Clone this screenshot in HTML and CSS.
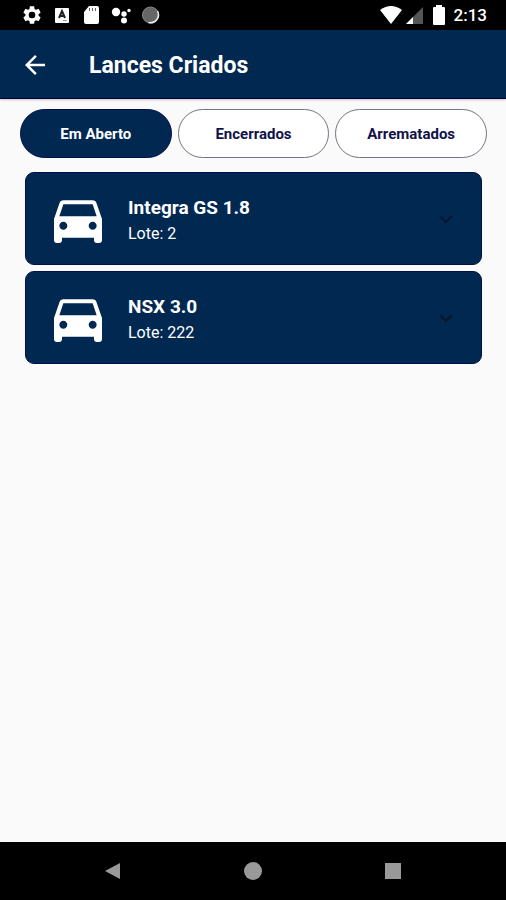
FILE: index.html
```html
<!DOCTYPE html>
<html lang="pt-BR">
<head>
  <meta charset="UTF-8">
  <meta name="viewport" content="width=device-width, initial-scale=1.0">
  <title>Lances Criados</title>
  <link rel="stylesheet" href="styles.css">
</head>
<body>
  <div class="status-bar">
    <div class="status-left">
      <svg width="22" height="22" viewBox="0 0 24 24" fill="#fff"><path d="M19.14 12.94c.04-.3.06-.61.06-.94 0-.32-.02-.64-.07-.94l2.03-1.58c.18-.14.23-.41.12-.61l-1.92-3.32c-.12-.22-.37-.29-.59-.22l-2.39.96c-.5-.38-1.03-.7-1.62-.94l-.36-2.54c-.04-.24-.24-.41-.48-.41h-3.84c-.24 0-.43.17-.47.41l-.36 2.54c-.59.24-1.13.57-1.62.94l-2.39-.96c-.22-.08-.47 0-.59.22L2.74 8.87c-.12.21-.08.47.12.61l2.03 1.58c-.05.3-.09.63-.09.94s.02.64.07.94l-2.03 1.58c-.18.14-.23.41-.12.61l1.92 3.32c.12.22.37.29.59.22l2.39-.96c.5.38 1.03.7 1.62.94l.36 2.54c.05.24.24.41.48.41h3.84c.24 0 .44-.17.47-.41l.36-2.54c.59-.24 1.13-.56 1.62-.94l2.39.96c.22.08.47 0 .59-.22l1.92-3.32c.12-.22.07-.47-.12-.61l-2.01-1.58zM12 15.6A3.6 3.6 0 1 1 12 8.4a3.6 3.6 0 0 1 0 7.2z"/></svg>
      <svg width="22" height="22" viewBox="0 0 22 22"><rect x="4" y="4" width="14" height="15" rx="1" fill="#fff"/><path d="M8 14l3-7 3 7M9 12h4" fill="none" stroke="#222" stroke-width="2"/><path d="M12 16.5h4" stroke="#999"/></svg>
      <svg width="22" height="22" viewBox="0 0 22 22"><path d="M8 2h8a2 2 0 0 1 2 2v14a2 2 0 0 1-2 2H5a2 2 0 0 1-2-2V8z" fill="#fff"/><path d="M8.5 4v3M11.5 4v3M14.5 4v3" stroke="#666" stroke-width="1"/></svg>
      <svg width="22" height="22" viewBox="0 0 22 22" fill="#fff"><circle cx="5" cy="8" r="4.2"/><circle cx="13" cy="10" r="2.7"/><circle cx="18" cy="6.5" r="1.7"/><circle cx="13" cy="16.5" r="3"/></svg>
      <svg width="22" height="22" viewBox="0 0 22 22"><circle cx="9.5" cy="11" r="8" fill="#666"/><circle cx="9.5" cy="11" r="8" fill="none" stroke="#888"/><path d="M16.5 7a8 8 0 0 1-9 11.500" fill="none" stroke="#eee" stroke-width="1.5"/></svg>
    </div>
    <div class="status-right">
      <svg width="24" height="22" viewBox="0 0 24 22"><path d="M1 6q11-8 22 0L12 20z" fill="#fff"/></svg>
      <svg width="18" height="22" viewBox="0 0 18 22"><path d="M18 3v17H1z" fill="#555"/><path d="M8 13v7H1z" fill="#fff"/></svg>
      <svg class="battery" width="12" height="22" viewBox="0 0 12 22"><path d="M3 1h6v2h2q1 0 1 1v16q0 1-1 1H1q-1 0-1-1V4q0-1 1-1h2z" fill="#fff"/></svg>
      <span class="clock">2:13</span>
    </div>
  </div>

  <header class="app-bar">
    <a href="#" class="back" aria-label="Voltar">
      <svg width="30" height="30" viewBox="0 0 24 24" fill="#fff"><path d="M20 11H7.83l5.59-5.59L12 4l-8 8 8 8 1.41-1.41L7.83 13H20v-2z"/></svg>
    </a>
    <h1>Lances Criados</h1>
  </header>

  <main>
    <div class="tabs">
      <button type="button" class="tab active">Em Aberto</button>
      <button type="button" class="tab">Encerrados</button>
      <button type="button" class="tab">Arrematados</button>
    </div>

    <div class="cards">
      <div class="card">
        <svg class="car" viewBox="0 0 24 24"><path d="M18.92 6.01C18.72 5.42 18.16 5 17.5 5h-11c-.66 0-1.21.42-1.42 1.01L3 12v8c0 .55.45 1 1 1h1c.55 0 1-.45 1-1v-1h12v1c0 .55.45 1 1 1h1c.55 0 1-.45 1-1v-8l-2.08-5.99zM6.5 16c-.83 0-1.5-.67-1.5-1.5S5.67 13 6.5 13s1.5.67 1.5 1.5S7.33 16 6.5 16zm11 0c-.83 0-1.5-.67-1.5-1.5s.67-1.5 1.5-1.5 1.5.67 1.5 1.5-.67 1.5-1.5 1.5zM5 11l1.5-4.5h11L19 11H5z"/></svg>
        <div class="info">
          <h2>Integra GS 1.8</h2>
          <p>Lote: 2</p>
        </div>
        <button type="button" class="expand" aria-label="Expandir Integra GS 1.8">
          <svg width="24" height="24" viewBox="0 0 24 24"><path d="M6 9l6 6 6-6"/></svg>
        </button>
      </div>
      <div class="card">
        <svg class="car" viewBox="0 0 24 24"><path d="M18.92 6.01C18.72 5.42 18.16 5 17.5 5h-11c-.66 0-1.21.42-1.42 1.01L3 12v8c0 .55.45 1 1 1h1c.55 0 1-.45 1-1v-1h12v1c0 .55.45 1 1 1h1c.55 0 1-.45 1-1v-8l-2.08-5.99zM6.5 16c-.83 0-1.5-.67-1.5-1.5S5.67 13 6.5 13s1.5.67 1.5 1.5S7.33 16 6.5 16zm11 0c-.83 0-1.5-.67-1.5-1.5s.67-1.5 1.5-1.5 1.5.67 1.5 1.5-.67 1.5-1.5 1.5zM5 11l1.5-4.5h11L19 11H5z"/></svg>
        <div class="info">
          <h2>NSX 3.0</h2>
          <p>Lote: 222</p>
        </div>
        <button type="button" class="expand" aria-label="Expandir NSX 3.0">
          <svg width="24" height="24" viewBox="0 0 24 24"><path d="M6 9l6 6 6-6"/></svg>
        </button>
      </div>
    </div>
  </main>

  <nav class="nav-bar">
    <button type="button" aria-label="Voltar"><svg width="20" height="20" viewBox="0 0 20 20"><path d="M17 2v16L2 10z"/></svg></button>
    <button type="button" aria-label="Início"><svg width="20" height="20" viewBox="0 0 20 20"><circle cx="10" cy="10" r="9"/></svg></button>
    <button type="button" aria-label="Recentes"><svg width="20" height="20" viewBox="0 0 20 20"><path d="M2 2h16v16H2z"/></svg></button>
  </nav>
</body>
</html>
```
FILE: styles.css
```css
* {
  box-sizing: border-box;
}
body {
  margin: 0;
  min-height: 100vh;
  display: flex;
  flex-direction: column;
  background-color: #fafafa;
  font-family: Roboto, "Liberation Sans", sans-serif;
}
h1, h2, p {
  margin: 0;
}
svg {
  display: block;
}
button {
  font-family: inherit;
  cursor: pointer;
}
.status-bar {
  height: 30px;
  padding: 0 19px 0 21px;
  display: flex;
  align-items: center;
  justify-content: space-between;
  background-color: #000;
}
.status-left {
  display: flex;
  gap: 8px;
}
.status-right {
  display: flex;
  align-items: center;
  gap: 2px;
}
.battery {
  margin: 0 7px 0 8px;
}
.clock {
  color: #fff;
  font-size: 17px;
  font-weight: 500;
  line-height: 30px;
}
.app-bar {
  height: 69px;
  padding: 2px 20px 0;
  display: flex;
  align-items: center;
  gap: 39px;
  background-color: #002851;
  border-bottom: 1px solid #00003c;
  box-shadow: 0 1px 2px rgba(60, 30, 60, 0.25);
}
h1 {
  color: #fff;
  font-size: 23px;
  font-weight: 700;
}
main {
  flex: 1;
}
.tabs {
  display: flex;
  gap: 6px;
  padding: 10px 19px 14px 20px;
}
.tab {
  flex: 1;
  height: 49px;
  padding: 0;
  border: 1px solid #737380;
  border-radius: 25px;
  background-color: #fff;
  color: #12124a;
  font-size: 15px;
  font-weight: 700;
}
.tab.active {
  background-color: #002851;
  border-color: #00104a;
  color: #fff;
}
.cards {
  display: flex;
  flex-direction: column;
  gap: 6px;
  padding: 0 24px 0 25px;
}
.card {
  height: 93px;
  padding: 0 11px 0 20px;
  display: flex;
  align-items: center;
  border: 1px solid #00104a;
  border-radius: 9px;
  background-color: #002851;
  color: #fff;
}
.car {
  width: 64px;
  height: 64px;
  fill: #fff;
}
.info {
  flex: 1;
  padding: 2px 0 0 18px;
}
.info h2 {
  font-size: 19px;
  font-weight: 700;
  line-height: 28px;
}
.info p {
  font-size: 16px;
  line-height: 24px;
}
.expand {
  padding: 12px;
  border: 0;
  background: none;
}
.expand path {
  fill: none;
  stroke: #04182c;
  stroke-width: 2;
}
.nav-bar {
  height: 58px;
  padding: 0 43px;
  display: flex;
  align-items: center;
  background-color: #000;
}
.nav-bar button {
  flex: 1;
  padding: 0;
  display: flex;
  justify-content: center;
  border: 0;
  background: none;
}
.nav-bar svg {
  fill: #999;
}
```
